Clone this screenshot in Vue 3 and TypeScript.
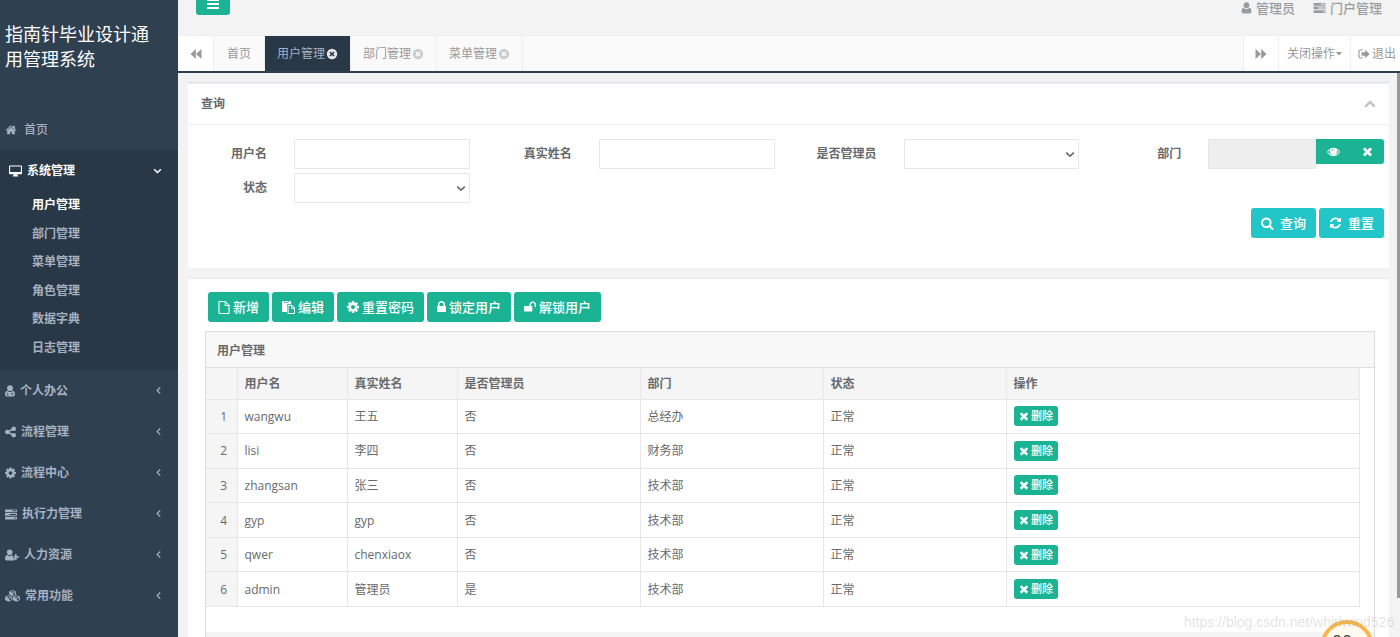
<script setup lang="ts">
import { h, ref } from 'vue'

interface Glyph {
  box: string
  d: string
}

const glyphs: Record<string, Glyph> = {
  home: {
    box: '0 0 1792 1792',
    d: 'M1472 992v480q0 26-19 45t-45 19h-384v-384h-256v384h-384q-26 0-45-19t-19-45v-480q0-1 .5-3t.5-3l575-474 575 474q1 2 1 6zm223-69l-62 74q-8 9-21 11h-3q-13 0-21-7l-692-577-692 577q-12 8-24 7-13-2-21-11l-62-74q-8-10-7-23.5t11-21.5l719-599q32-26 76-26t76 26l244 204v-195q0-14 9-23t23-9h192q14 0 23 9t9 23v408l219 182q10 8 11 21.5t-7 23.5z',
  },
  desktop: {
    box: '0 0 14 12',
    d: 'M1 0H13Q14 0 14 1V8.500Q14 9.500 13 9.500H9V10.500L10 11V12H4V11L5 10.500V9.500H1Q0 9.500 0 8.500V1Q0 0 1 0ZM1.200 1.200V7H12.800V1.200Z',
  },
  user: {
    box: '0 0 10 12',
    d: 'M5 .3a2.900 2.900 0 0 1 2.900 2.900A2.900 2.900 0 0 1 5 6.100 2.900 2.900 0 0 1 2.100 3.200 2.900 2.900 0 0 1 5 .3zM2.200 5.700a3.900 3.900 0 0 0 5.600 0C9.400 6 10 7.700 10 9.500c0 1.200-.8 2-1.900 2H1.900C.8 11.500 0 10.700 0 9.500c0-1.800.6-3.500 2.200-3.800z',
  },
  doctor: {
    box: '0 0 10 12',
    d: 'M5 .3a2.900 2.900 0 0 1 2.900 2.900A2.900 2.900 0 0 1 5 6.100 2.900 2.900 0 0 1 2.100 3.200 2.900 2.900 0 0 1 5 .3zM2.200 5.700a3.900 3.900 0 0 0 5.600 0C9.400 6 10 7.700 10 9.500c0 1.200-.8 2-1.900 2H1.900C.8 11.500 0 10.700 0 9.500c0-1.800.6-3.500 2.200-3.800zM2.500 7.500v1.700h-.6v1h1.500v-1h-.4V7.500zM7 7.500v1h-.7v1.700h.5V9h1v1.200h.5V8.500h-.8v-1z',
  },
  share: {
    box: '128 128 1536 1536',
    d: 'M1344 1024q133 0 226.500 93.500t93.500 226.500-93.500 226.500-226.500 93.500-226.500-93.500-93.500-226.500q0-12 2-34l-360-180q-92 86-218 86-133 0-226.500-93.500t-93.500-226.500 93.500-226.500 226.500-93.500q126 0 218 86l360-180q-2-22-2-34 0-133 93.500-226.500t226.500-93.500 226.500 93.500 93.500 226.500-93.500 226.500-226.500 93.500q-126 0-218-86l-360 180q2 22 2 34t-2 34l360 180q92-86 218-86z',
  },
  cog: {
    box: '128 128 1536 1536',
    d: 'M1152 896q0-106-75-181t-181-75-181 75-75 181 75 181 181 75 181-75 75-181zm512-109v222q0 12-8 23t-20 13l-185 28q-19 54-39 91 35 50 107 138 10 12 10 25t-9 23q-27 37-99 108t-94 71q-12 0-26-9l-138-108q-44 23-91 38-16 136-29 186-7 28-36 28h-222q-14 0-24.500-8.500t-11.500-21.500l-28-184q-49-16-90-37l-141 107q-10 9-25 9-14 0-25-11-126-114-165-168-7-10-7-23 0-12 8-23 15-21 51-66.500t54-70.500q-27-50-41-99l-183-27q-13-2-21-12.500t-8-23.500v-222q0-12 8-23t19-13l186-28q14-46 39-92-40-57-107-138-10-12-10-24 0-10 9-23 26-36 98.500-107.500t94.500-71.500q13 0 26 10l138 107q44-23 91-38 16-136 29-186 7-28 36-28h222q14 0 24.500 8.500t11.500 21.500l28 184q49 16 90 37l142-107q9-9 24-9 13 0 25 10 129 119 165 170 7 8 7 22 0 12-8 23-15 21-51 66.500t-54 70.500q26 50 41 98l183 28q13 2 21 12.500t8 23.500z',
  },
  tasks: {
    box: '0 0 13 12',
    d: 'M.5 1h12q.5 0 .5.5v2q0 .5-.5.5H.5Q0 4 0 3.500v-2Q0 1 .5 1zM8 2v1h4V2zM.5 5h12q.5 0 .5.5v2q0 .5-.5.5H.5Q0 8 0 7.500v-2Q0 5 .5 5zM5 6v1h7V6zM.5 9h12q.5 0 .5.5v2q0 .5-.5.5H.5Q0 12 0 11.500v-2Q0 9 .5 9zM10 10v1h2v-1z',
  },
  userPlus: {
    box: '0 0 14 12',
    d: 'M4.700.5a2.800 2.800 0 0 1 2.800 2.800 2.800 2.800 0 0 1-2.800 2.800A2.800 2.800 0 0 1 1.900 3.300 2.800 2.800 0 0 1 4.700.5zM2.200 6a3.800 3.800 0 0 0 5 0l.6.2V9h1.700v2.300q-.3.200-.8.200H1.700Q0 11.500 0 9.600 0 6.300 2.200 6zM10 5h1.600v2.200H14v1.600h-2.400V11H10V8.800H8.500V7.200H10z',
  },
  cubes: {
    box: '0 0 16 13',
    d: 'M8 0l3.700 1.500v3.400L8 6.600 4.300 4.900V1.500zM8 1L5.700 1.900 8 2.900l2.300-1zM8.500 3.700v1.700l2.200-1V2.800zM3.800 5.700l3.800 1.600v3.600l-3.800 1.800L0 10.900V7.300zM3.800 6.700L1.400 7.700l2.400 1 2.400-1zM4.300 9.500v2l2.300-1.100V8.500zM12.200 5.700L16 7.300v3.600l-3.800 1.800-3.800-1.800V7.300zM12.200 6.700l-2.400 1 2.400 1 2.400-1zM12.700 9.500v2l2.300-1.100V8.500z',
  },
  bars: { box: '0 0 12 11', d: 'M0 0h12v2H0zM0 4h12v2H0zM0 8h12v2H0z' },
  backward: { box: '0 0 12 12', d: 'M5.800 1v10L.5 6zM11.500 1v10L6 6z' },
  forward: { box: '0 0 12 12', d: 'M6.200 1v10L11.500 6zM.5 1v10L6 6z' },
  closeCircle: {
    box: '0 0 12 12',
    d: 'M6 .8A5.200 5.200 0 0 1 11.200 6 5.200 5.200 0 0 1 6 11.200 5.200 5.200 0 0 1 .8 6 5.200 5.200 0 0 1 6 .8zM4.500 3.400L3.400 4.500 4.900 6 3.400 7.500l1.100 1.100L6 7.100l1.500 1.500 1.100-1.100L7.100 6l1.500-1.500-1.100-1.100L6 4.900z',
  },
  signOut: {
    box: '0 0 12 12',
    d: 'M4.800 1.500v1H2.700q-1.200 0-1.200 1.200v4.600q0 1.200 1.200 1.200h2.100v1H2.500Q.4 10.500.4 8.400V3.600Q.4 1.500 2.500 1.500zM7.200 1.800L11.700 6l-4.500 4.200V7.700H3.600V4.300h3.600z',
  },
  times: {
    box: '0 0 1792 1792',
    d: 'M1490 1322q0 40-28 68l-136 136q-28 28-68 28t-68-28l-294-294-294 294q-28 28-68 28t-68-28l-136-136q-28-28-28-68t28-68l294-294-294-294q-28-28-28-68t28-68l136-136q28-28 68-28t68 28l294 294 294-294q28-28 68-28t68 28l136 136q28 28 28 68t-28 68l-294 294 294 294q28 28 28 68z',
  },
  eye: {
    box: '0 0 14 12',
    d: 'M7 1.500q4.200 0 7 4.500-2.800 4.500-7 4.500T0 6q2.800-4.500 7-4.500zM3.800 3.400Q2.200 4.300 1.100 6 3.500 9.500 7 9.500T12.900 6q-1.100-1.700-2.700-2.600.7 1 .7 2A3.900 3.900 0 0 1 7 9.200a3.900 3.900 0 0 1-3.900-3.800q0-1 .7-2zM7 2.700Q4.600 2.900 4.400 5.300h.8Q5.300 3.600 7 3.500z',
  },
  search: {
    box: '64 64 1728 1728',
    d: 'M1216 832q0-185-131.500-316.500t-316.500-131.500-316.500 131.500-131.500 316.500 131.500 316.500 316.500 131.500 316.500-131.500 131.500-316.500zm512 832q0 52-38 90t-90 38q-54 0-90-38l-343-342q-179 124-399 124-143 0-273.500-55.500t-225-150-150-225-55.500-273.500 55.500-273.500 150-225 225-150 273.500-55.500 273.500 55.500 225 150 150 225 55.500 273.500q0 220-124 399l343 343q37 37 37 90z',
  },
  refresh: {
    box: '64 64 1664 1664',
    d: 'M1639 1056q0 5-1 7-64 268-268 434.500t-478 166.500q-146 0-282.500-55t-243.500-157l-129 129q-19 19-45 19t-45-19-19-45v-448q0-26 19-45t45-19h448q26 0 45 19t19 45-19 45l-137 137q71 66 161 102t187 36q134 0 250-65t186-179q11-17 53-117 8-23 30-23h192q13 0 22.500 9.500t9.500 22.500zm25-800v448q0 26-19 45t-45 19h-448q-26 0-45-19t-19-45 19-45l138-138q-148-137-349-137-134 0-250 65t-186 179q-11 17-53 117-8 23-30 23h-199q-13 0-22.500-9.500t-9.500-22.500v-7q65-268 270-434.500t480-166.500q146 0 284 55.500t245 156.500l130-129q19-19 45-19t45 19 19 45z',
  },
  file: { box: '0 0 12 14', d: 'M1 0h6.500L12 4.300V13q0 1-1 1H1q-1 0-1-1V1q0-1 1-1zM1.200 1.200v11.600h9.600V5.400H6.800V1.200zM7.900 1.500v2.800h2.700z' },
  paste: { box: '0 0 14 14', d: 'M.8 0h1.700v1.800h4.700V0H9q.8 0 .8.8v2.400H6.400q-1.100 0-1.100 1.100v7.600H.8q-.8 0-.8-.8V.8Q0 0 .8 0zM3.200 0h3.300v1.100H3.200zM6.800 4h3.700L14 7.400v5.800q0 .8-.8.8H6.800Q6 14 6 13.200V4.800Q6 4 6.800 4zM7.100 5.100v7.800h5.800V8.300H9.800V5.100zM10.800 5.700v1.600h1.600z' },
  lock: {
    box: '320 128 1152 1536',
    d: 'M640 768h512v-192q0-106-75-181t-181-75-181 75-75 181v192zm832 96v576q0 40-28 68t-68 28h-960q-40 0-68-28t-28-68v-576q0-40 28-68t68-28h32v-192q0-184 132-316t316-132 316 132 132 316v192h32q40 0 68 28t28 68z',
  },
  unlock: {
    box: '64 64 1664 1664',
    d: 'M1728 576v256q0 26-19 45t-45 19h-64q-26 0-45-19t-19-45v-256q0-106-75-181t-181-75-181 75-75 181v192h96q40 0 68 28t28 68v576q0 40-28 68t-68 28h-960q-40 0-68-28t-28-68v-576q0-40 28-68t68-28h672v-192q0-185 131.500-316.500t316.500-131.500 316.500 131.500 131.500 316.500z',
  },
  left: { box: '0 0 8 12', d: 'M5.500 2l1 1-3 3 3 3-1 1-4-4z' },
  down: { box: '0 0 12 8', d: 'M2.200 1L.8 2.400 6 7.200l5.200-4.800L9.800 1 6 4.600z' },
  up: { box: '0 0 12 8', d: 'M2.200 7.400L.4 5.700 6 .3l5.600 5.400-1.800 1.700L6 3.700z' },
  caret: { box: '0 0 6 4', d: 'M0 0h6L3 3.500z' },
}

// Small inline glyph: name, width and height in pixels.
const Icon = (props: { name: string; w?: number; t?: number }) => {
  const g = glyphs[props.name]
  return h(
    'svg',
    { class: 'icon', viewBox: g.box, width: props.w ?? 12, height: props.t ?? 12, 'aria-hidden': 'true' },
    [h('path', { d: g.d, fill: 'currentColor', 'fill-rule': 'evenodd' })],
  )
}

const submenu = ['用户管理', '部门管理', '菜单管理', '角色管理', '数据字典', '日志管理']
const groups = [
  { label: '个人办公', icon: 'doctor', w: 10 },
  { label: '流程管理', icon: 'share', w: 11 },
  { label: '流程中心', icon: 'cog', w: 11 },
  { label: '执行力管理', icon: 'tasks', w: 12 },
  { label: '人力资源', icon: 'userPlus', w: 14 },
  { label: '常用功能', icon: 'cubes', w: 15 },
]
const tabs = [
  { label: '首页', closable: false },
  { label: '用户管理', closable: true },
  { label: '部门管理', closable: true },
  { label: '菜单管理', closable: true },
]
const activeTab = ref('用户管理')

const tools = [
  { label: '新增', icon: 'file', w: 12, t: 13 },
  { label: '编辑', icon: 'paste', w: 13, t: 13 },
  { label: '重置密码', icon: 'cog', w: 12, t: 12 },
  { label: '锁定用户', icon: 'lock', w: 9, t: 12 },
  { label: '解锁用户', icon: 'unlock', w: 12, t: 12 },
]

const columns = ['用户名', '真实姓名', '是否管理员', '部门', '状态', '操作']
const users = [
  { account: 'wangwu', name: '王五', admin: '否', dept: '总经办', state: '正常' },
  { account: 'lisi', name: '李四', admin: '否', dept: '财务部', state: '正常' },
  { account: 'zhangsan', name: '张三', admin: '否', dept: '技术部', state: '正常' },
  { account: 'gyp', name: 'gyp', admin: '否', dept: '技术部', state: '正常' },
  { account: 'qwer', name: 'chenxiaox', admin: '否', dept: '技术部', state: '正常' },
  { account: 'admin', name: '管理员', admin: '是', dept: '技术部', state: '正常' },
]
</script>

<template>
  <div class="app">
    <aside class="sidebar">
      <h1 class="brand">指南针毕业设计通用管理系统</h1>
      <nav>
        <a href="#" class="item home"><Icon name="home" />首页</a>
        <section class="open">
          <a href="#" class="item current"><Icon name="desktop" :w="13" />系统管理<Icon name="down" class="arrow" :w="9" :t="6" /></a>
          <div class="submenu">
            <a v-for="(s, i) in submenu" :key="s" href="#" :class="{ on: i === 0 }">{{ s }}</a>
          </div>
        </section>
        <a v-for="g in groups" :key="g.label" href="#" class="item">
          <Icon :name="g.icon" :w="g.w" />{{ g.label }}<Icon name="left" class="arrow" :w="7" :t="11" />
        </a>
      </nav>
    </aside>

    <div class="main">
      <header class="topbar">
        <button type="button" class="burger" aria-label="菜单"><Icon name="bars" :t="11" /></button>
        <div class="links">
          <a href="#"><Icon name="user" :w="11" />管理员</a>
          <a href="#"><Icon name="tasks" :w="13" :t="11" />门户管理</a>
        </div>
      </header>

      <div class="tabbar">
        <button type="button" class="roll back" aria-label="向左"><Icon name="backward" /></button>
        <button
          v-for="t in tabs"
          :key="t.label"
          type="button"
          class="tab"
          :class="{ active: t.label === activeTab }"
          @click="activeTab = t.label"
        >
          {{ t.label }}<Icon v-if="t.closable" name="closeCircle" />
        </button>
        <span class="space"></span>
        <button type="button" class="roll fwd" aria-label="向右"><Icon name="forward" /></button>
        <button type="button" class="ops">关闭操作<Icon name="caret" :w="6" :t="4" /></button>
        <button type="button" class="exit"><Icon name="signOut" />退出</button>
      </div>

      <main class="content">
        <section class="panel query">
          <div class="panel-title">
            <h2>查询</h2>
            <button type="button" class="fold" aria-label="收起"><Icon name="up" :t="8" /></button>
          </div>
          <form class="form" @submit.prevent>
            <div class="fields">
              <div class="field"><label for="f-user">用户名</label><input id="f-user" type="text" /></div>
              <div class="field"><label for="f-name">真实姓名</label><input id="f-name" type="text" /></div>
              <div class="field">
                <label for="f-admin">是否管理员</label>
                <div class="select"><select id="f-admin"><option></option></select><Icon name="down" :w="10" :t="7" /></div>
              </div>
              <div class="field">
                <label for="f-dept">部门</label>
                <div class="picker">
                  <input id="f-dept" type="text" readonly />
                  <div class="pair">
                    <button type="button" aria-label="选择"><Icon name="eye" :w="13" /></button>
                    <button type="button" aria-label="清除"><Icon name="times" :w="13" :t="13" /></button>
                  </div>
                </div>
              </div>
              <div class="field">
                <label for="f-state">状态</label>
                <div class="select"><select id="f-state"><option></option></select><Icon name="down" :w="10" :t="7" /></div>
              </div>
            </div>
            <div class="submit">
              <button type="submit" class="btn info"><Icon name="search" :w="13" :t="13" />查询</button>
              <button type="reset" class="btn info"><Icon name="refresh" :w="13" />重置</button>
            </div>
          </form>
        </section>

        <section class="panel list">
          <div class="tools">
            <button v-for="b in tools" :key="b.label" type="button" class="btn primary">
              <Icon :name="b.icon" :w="b.w" :t="b.t" />{{ b.label }}
            </button>
          </div>
          <div class="grid">
            <h3>用户管理</h3>
            <div class="table-wrap">
              <table>
                <colgroup>
                  <col class="c-no" /><col class="c-s" /><col class="c-s" /><col class="c-m" /><col class="c-m" /><col class="c-m" /><col />
                </colgroup>
                <thead>
                  <tr>
                    <th></th>
                    <th v-for="c in columns" :key="c" scope="col">{{ c }}</th>
                  </tr>
                </thead>
                <tbody>
                  <tr v-for="(u, i) in users" :key="u.account">
                    <td class="no">{{ i + 1 }}</td>
                    <td>{{ u.account }}</td>
                    <td>{{ u.name }}</td>
                    <td>{{ u.admin }}</td>
                    <td>{{ u.dept }}</td>
                    <td>{{ u.state }}</td>
                    <td class="act"><button type="button" class="del"><Icon name="times" />删除</button></td>
                  </tr>
                </tbody>
              </table>
            </div>
            <div class="pager"></div>
          </div>
        </section>
        <div class="thumb"></div>
      </main>
    </div>

    <div class="badge">00</div>
    <div class="mark">https://blog.csdn.net/whirlwind526</div>
  </div>
</template>

<style>
body {
  margin: 0;
  overflow: hidden;
}
</style>

<style scoped>
.app {
  position: relative;
  display: flex;
  height: 100vh;
  overflow: hidden;
  background: #f3f3f4;
  color: #676a6c;
  font: 12px/18px 'Open Sans', 'Noto Sans CJK SC', sans-serif;
}
* {
  box-sizing: border-box;
}
a {
  color: inherit;
  text-decoration: none;
}
button {
  border: 0;
  margin: 0;
  padding: 0;
  background: none;
  font: inherit;
  color: inherit;
  display: flex;
  align-items: center;
  justify-content: center;
  white-space: nowrap;
}
.icon {
  flex: none;
  display: block;
}

.sidebar {
  flex: none;
  width: 178px;
  background: #2f4050;
  color: #a7b1c2;
}
.brand {
  margin: 0;
  padding: 22px 24px 37px 5px;
  font-size: 18px;
  line-height: 25px;
  font-weight: 400;
  color: #fff;
}
.item {
  display: flex;
  align-items: center;
  gap: 5px;
  height: 41px;
  padding: 0 16px 0 5px;
  font-weight: 600;
}
.home {
  gap: 7px;
  font-weight: 500;
}
.current {
  padding-left: 9px;
  color: #fff;
}
.arrow {
  margin-left: auto;
}
.open {
  background: #293846;
  padding-bottom: 8px;
}
.submenu {
  display: flex;
  flex-direction: column;
  height: 171px;
}
.submenu a {
  flex: 1;
  display: flex;
  align-items: center;
  padding-left: 32px;
  font-weight: 600;
}
.submenu .on {
  color: #fff;
}

.main {
  flex: 1;
  min-width: 0;
  display: flex;
  flex-direction: column;
}
.topbar {
  flex: none;
  display: flex;
  justify-content: space-between;
  height: 35px;
  padding: 0 18px;
}
.burger {
  width: 34px;
  height: 22px;
  margin-top: -7px;
  border-radius: 3px;
  background: #1ab394;
  color: #fff;
}
.links {
  display: flex;
  gap: 18px;
  height: 15px;
  font-size: 13px;
  font-weight: 500;
  color: #999c9e;
}
.links a {
  display: flex;
  align-items: center;
  gap: 4px;
}
.tabbar {
  flex: none;
  display: flex;
  height: 38px;
  border-top: 1px solid #efefef;
  border-bottom: 2px solid #2f4050;
  background: #fafafa;
  color: #999;
}
.tab {
  gap: 1px;
  min-width: 51px;
  padding: 0 12px;
  border-right: 1px solid #eee;
}
.tab .icon {
  color: #ccc;
}
.tab.active {
  background: #293846;
  color: #a7b1c2;
}
.tab.active .icon {
  color: #e6e6e6;
}
.space {
  flex: 1;
}
.roll {
  width: 36px;
  background: #fff;
  border-right: 1px solid #eee;
}
.fwd {
  border-left: 1px solid #eee;
}
.ops,
.exit {
  background: #fff;
}
.ops {
  gap: 1px;
  width: 71px;
}
.exit {
  gap: 2px;
  width: 50px;
  padding-left: 3px;
  border-left: 1px solid #eee;
}

.content {
  position: relative;
  flex: 1;
  padding: 8px 11px 0 10px;
  display: flex;
  flex-direction: column;
  gap: 10px;
}
.thumb {
  position: absolute;
  top: 0;
  right: 0;
  bottom: 39px;
  width: 3px;
  background: #999;
}
.panel {
  background: #fff;
}
.query {
  border-top: 3px solid #e7eaec;
}
.panel-title {
  display: flex;
  justify-content: space-between;
  align-items: center;
  height: 41px;
  padding: 0 13px;
  border-bottom: 1px solid #eee;
}
.panel-title h2 {
  margin: 0;
  font-size: 12px;
  font-weight: 600;
}
.fold {
  color: #c4c4c4;
}
.form {
  padding: 14px 5px 30px;
}
.fields {
  display: grid;
  grid-template-columns: repeat(4, 1fr);
  gap: 4px 28px;
}
.field {
  display: grid;
  grid-template-columns: 74px 1fr;
  gap: 27px;
}
.field label {
  padding-top: 6px;
  text-align: right;
  font-weight: 600;
  white-space: nowrap;
}
input,
select {
  width: 100%;
  min-width: 0;
  height: 30px;
  margin: 0;
  padding: 0 8px;
  border: 1px solid #e5e6e7;
  border-radius: 1px;
  background: #fff;
  font: inherit;
  color: inherit;
}
select {
  appearance: none;
}
.select {
  position: relative;
}
.select .icon {
  position: absolute;
  right: 4px;
  top: 12px;
  pointer-events: none;
}
.picker {
  display: flex;
  align-items: flex-start;
}
.picker input {
  flex: 1;
  background: #eee;
}
.pair {
  display: flex;
  height: 25px;
  border-radius: 0 3px 3px 0;
  background: #1ab394;
  color: #fff;
}
.pair button {
  width: 34px;
}
.submit {
  display: flex;
  justify-content: flex-end;
  gap: 3px;
  padding-top: 5px;
}
.btn {
  height: 30px;
  border-radius: 3px;
  color: #fff;
  font-size: 13px;
  font-weight: 500;
}
.info {
  gap: 6px;
  padding: 0 10px;
  background: #23c6c8;
}
.primary {
  gap: 3px;
  padding: 0 10px;
  background: #1ab394;
}

.list {
  flex: 1;
  display: flex;
  flex-direction: column;
  border-top: 1px solid #e7eaec;
  padding: 13px 14px 0 17px;
}
.tools {
  display: flex;
  gap: 3px;
  padding-left: 3px;
}
.grid {
  flex: 1;
  display: flex;
  flex-direction: column;
  margin-top: 9px;
  border: 1px solid #ddd;
  border-bottom: 0;
}
.grid h3 {
  margin: 0;
  height: 36px;
  padding-left: 11px;
  border-bottom: 1px solid #ddd;
  background: #f8f8f8;
  font-size: 12px;
  line-height: 38px;
  font-weight: 600;
}
.table-wrap {
  flex: 1;
  padding-right: 14px;
}
table {
  width: 100%;
  height: 239px;
  table-layout: fixed;
  border-collapse: collapse;
}
.c-no {
  width: 31px;
}
.c-s {
  width: 110px;
}
.c-m {
  width: 183px;
}
th,
td {
  padding: 1px 0 0 7px;
  border-right: 1px solid #e7e7e7;
  border-bottom: 1px solid #e7e7e7;
  text-align: left;
}
th {
  height: 31px;
  background: #f5f5f5;
  font-weight: 600;
}
.no {
  padding-left: 5px;
  background: #f5f5f5;
  text-align: center;
}
.act {
  padding-top: 0;
}
.del {
  gap: 1px;
  width: 44px;
  height: 20px;
  border-radius: 3px;
  background: #1ab394;
  color: #fff;
  font-size: 11px;
  font-weight: 500;
}
.pager {
  height: 5px;
  background: #f4f4f4;
}

.badge {
  position: absolute;
  right: 26px;
  bottom: -37px;
  width: 54px;
  height: 54px;
  padding-right: 10px;
  border: 4px solid #f8b64c;
  border-radius: 50%;
  background: #fffaf0;
  color: #444;
  font-size: 18px;
  line-height: 34px;
  text-align: center;
}
.mark {
  position: absolute;
  right: 6px;
  bottom: 6px;
  color: rgba(150, 150, 150, 0.28);
  font: 14px/18px 'Liberation Sans', sans-serif;
}
</style>
